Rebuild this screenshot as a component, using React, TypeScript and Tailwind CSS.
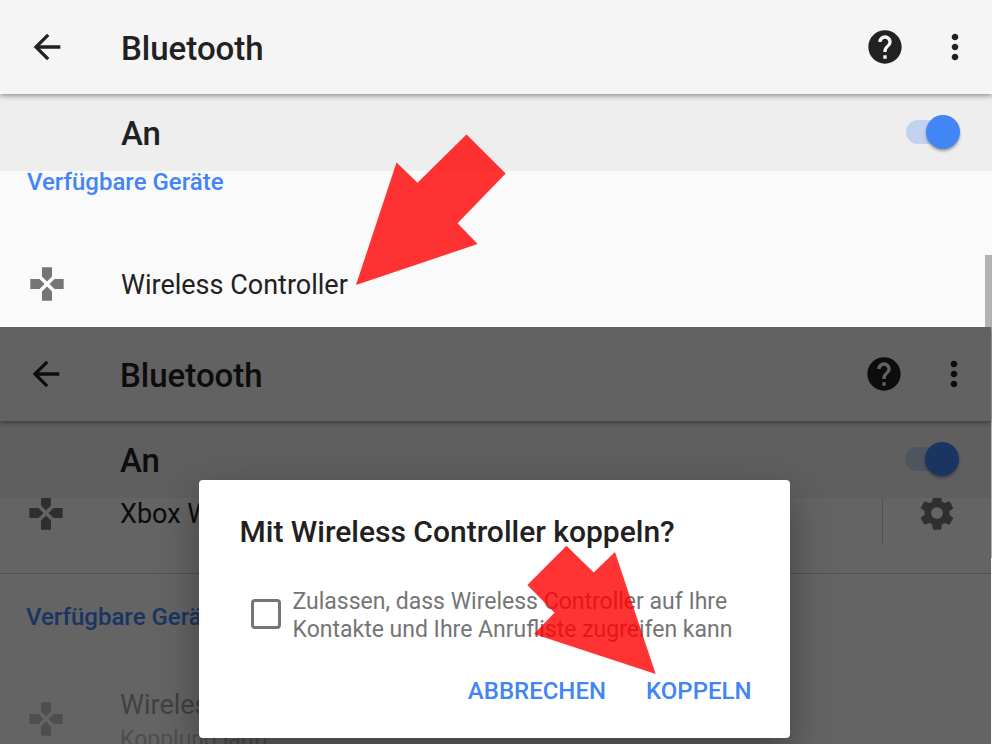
import { useId, type ReactNode } from 'react';

const iconPaths = {
  back: 'M20 11H7.83l5.59-5.59L12 4l-8 8 8 8 1.41-1.41L7.83 13H20v-2z',
  help: 'M12 2C6.48 2 2 6.48 2 12s4.48 10 10 10 10-4.48 10-10S17.52 2 12 2zm1 17h-2v-2h2v2zm2.07-7.75l-.9.92C13.45 12.9 13 13.5 13 15h-2v-.5c0-1.1.45-2.1 1.17-2.83l1.24-1.26c.37-.36.59-.86.59-1.41 0-1.1-.9-2-2-2s-2 .9-2 2H8c0-2.21 1.79-4 4-4s4 1.79 4 4c0 .88-.36 1.68-.93 2.25z',
  more: 'M12 8c1.1 0 2-.9 2-2s-.9-2-2-2-2 .9-2 2 .9 2 2 2zm0 2c-1.1 0-2 .9-2 2s.9 2 2 2 2-.9 2-2-.9-2-2-2zm0 6c-1.1 0-2 .9-2 2s.9 2 2 2 2-.9 2-2-.9-2-2-2z',
  gamepad:
    'M15 7.5V2H9v5.5l3 3 3-3zM7.5 9H2v6h5.5l3-3-3-3zM9 16.5V22h6v-5.5l-3-3-3 3zM16.5 9l-3 3 3 3H22V9h-5.5z',
  settings:
    'M19.43 12.98c.04-.32.07-.64.07-.98s-.03-.66-.07-.98l2.11-1.65c.19-.15.24-.42.12-.64l-2-3.46c-.12-.22-.39-.3-.61-.22l-2.49 1c-.52-.4-1.08-.73-1.69-.98l-.38-2.65C14.46 2.18 14.25 2 14 2h-4c-.25 0-.46.18-.49.42l-.38 2.65c-.61.25-1.17.59-1.69.98l-2.49-1c-.23-.09-.49 0-.61.22l-2 3.46c-.13.22-.07.49.12.64l2.11 1.65c-.04.32-.07.65-.07.98s.03.66.07.98l-2.11 1.65c-.19.15-.24.42-.12.64l2 3.46c.12.22.39.3.61.22l2.49-1c.52.4 1.08.73 1.69.98l.38 2.65c.03.24.24.42.49.42h4c.25 0 .46-.18.49-.42l.38-2.65c.61-.25 1.17-.59 1.69-.98l2.49 1c.23.09.49 0 .61-.22l2-3.46c.12-.22.07-.49-.12-.64l-2.11-1.65zM12 15.5c-1.93 0-3.5-1.57-3.5-3.5s1.57-3.5 3.5-3.5 3.5 1.57 3.5 3.5-1.57 3.5-3.5 3.5z',
};

function Icon({ name }: { name: keyof typeof iconPaths }) {
  return (
    <svg viewBox="0 0 24 24" className="w-10 h-10 shrink-0" fill="currentColor" aria-hidden="true">
      <path d={iconPaths[name]} />
    </svg>
  );
}

function BluetoothScreen({ children }: { children: ReactNode }) {
  const switchId = useId();

  return (
    <div className="flex h-full min-h-0 flex-col bg-[#fafafa] text-[#212121]">
      <header className="relative z-10 flex h-[94px] shrink-0 items-center bg-[#f5f5f5] pl-[27px] pr-[17px] shadow-[0_1px_6px_rgba(0,0,0,0.5)]">
        <button aria-label="Zurück">
          <Icon name="back" />
        </button>
        <h1 className="ml-[54px] flex-1 pt-1 text-[33px] leading-10 font-medium">Bluetooth</h1>
        <button aria-label="Hilfe">
          <Icon name="help" />
        </button>
        <button aria-label="Weitere Optionen" className="ml-[30px]">
          <Icon name="more" />
        </button>
      </header>

      <div className="flex h-[77px] shrink-0 items-center justify-between bg-[#eeeeee] pb-[2px] pl-[121px] pr-8">
        <label htmlFor={switchId} className="pt-1 text-[33px] leading-10 font-medium">
          An
        </label>
        <input
          id={switchId}
          type="checkbox"
          role="switch"
          defaultChecked
          className="relative h-6 w-[54px] appearance-none before:absolute before:inset-y-0 before:left-0 before:w-12 before:rounded-full before:bg-[#4285f4]/25 after:absolute after:right-0 after:-top-[5px] after:h-[34px] after:w-[34px] after:rounded-full after:bg-[#4285f4] after:shadow-[0_2px_3px_rgba(0,0,0,0.35)]"
        />
      </div>

      <div className="min-h-0 flex-1 overflow-hidden">{children}</div>
    </div>
  );
}

function CategoryTitle() {
  return (
    <h2 className="flex h-[85px] items-center pl-[27px] text-[24px] leading-7 font-medium text-[#4285f4]">
      Verfügbare Geräte
    </h2>
  );
}

interface DeviceRowProps {
  name: string;
  status?: string;
  disabled?: boolean;
  configurable?: boolean;
}

function DeviceRow({ name, status, disabled, configurable }: DeviceRowProps) {
  return (
    <div className="flex h-[120px] items-center pr-[34px]">
      <button
        disabled={disabled}
        className="flex h-full flex-1 items-center gap-[54px] pl-[27px] text-left disabled:opacity-40"
      >
        <span className="text-[#757575]">
          <Icon name="gamepad" />
        </span>
        <span className="flex flex-col pt-[2px]">
          <span className="text-[27px] leading-[34px]">{name}</span>
          {status && <span className="-mb-[6px] text-[23px] leading-9 text-[#757575]">{status}</span>}
        </span>
      </button>
      {configurable && (
        <button
          aria-label="Einstellungen"
          className="flex h-16 items-center border-l border-black/20 pl-[34px] text-[#757575]"
        >
          <Icon name="settings" />
        </button>
      )}
    </div>
  );
}

function PairingDialog() {
  return (
    <div
      role="dialog"
      aria-labelledby="pairing-title"
      className="w-[591px] rounded bg-white pt-8 pr-[38px] pb-[27px] pl-[41px] text-[#212121] shadow-[0_16px_40px_rgba(0,0,0,0.35)]"
    >
      <h2 id="pairing-title" className="text-[30px] leading-10 font-medium">
        Mit Wireless Controller koppeln?
      </h2>
      <label className="mt-9 flex items-start pl-[11px] text-[23px] leading-7 text-[#757575]">
        <input
          type="checkbox"
          className="mt-[11px] mr-3 h-[30px] w-[30px] shrink-0 appearance-none rounded-[4px] border-[3px] border-[#757575]"
        />
        <span>
          Zulassen, dass Wireless Controller auf Ihre
          <br />
          Kontakte und Ihre Anrufliste zugreifen kann
        </span>
      </label>
      <div className="mt-[27px] flex justify-end gap-10 text-[24px] leading-10 font-medium text-[#4285f4]">
        <button>ABBRECHEN</button>
        <button>KOPPELN</button>
      </div>
    </div>
  );
}

export default function App() {
  return (
    <div className="grid h-screen grid-rows-[327fr_417fr] overflow-hidden bg-[#fafafa] font-['Roboto',sans-serif]">
      <section className="relative min-h-0 overflow-hidden">
        <BluetoothScreen>
          {/* list is scrolled a little */}
          <div className="-mt-8">
            <CategoryTitle />
            <DeviceRow name="Wireless Controller" />
          </div>
        </BluetoothScreen>
        <div className="absolute right-0 bottom-0 h-[72px] w-[7px] bg-[#b3b3b3]" />
        <svg
          viewBox="0 0 150 151"
          className="absolute left-[356px] top-[134px] w-[150px] h-[151px]"
          fill="rgba(255,0,0,0.8)"
          aria-hidden="true"
        >
          <path d="M110.5 0.5L149.7 39.5L101.5 89.3L121.7 110L0 151L40.5 28.5L61.5 48.7Z" />
        </svg>
      </section>

      <section className="relative min-h-0 overflow-hidden">
        <div className="absolute right-0 top-0 h-[231px] w-px bg-[#b3b3b3]" />
        <div className="relative -ml-px h-full w-full">
          <BluetoothScreen>
            <div className="-mt-[45px]">
              <DeviceRow name="Xbox Wireless Controller" configurable />
              <div className="border-t border-black/20">
                <CategoryTitle />
                <DeviceRow name="Wireless Controller" status="Kopplung läuft" disabled />
              </div>
            </div>
          </BluetoothScreen>
          <div className="absolute inset-0 z-20 flex items-end justify-center bg-black/60 pr-[2px] pb-[6px]">
            <PairingDialog />
          </div>
        </div>
        <svg
          viewBox="0 0 129 129"
          className="absolute left-[527px] top-[218px] z-30 w-[129px] h-[129px] pointer-events-none"
          fill="rgba(255,0,0,0.8)"
          aria-hidden="true"
        >
          <path d="M39.5 0.7L66.7 27.5L88 7L128.7 129L7 89L27.5 67.7L0.3 40Z" />
        </svg>
      </section>
    </div>
  );
}
